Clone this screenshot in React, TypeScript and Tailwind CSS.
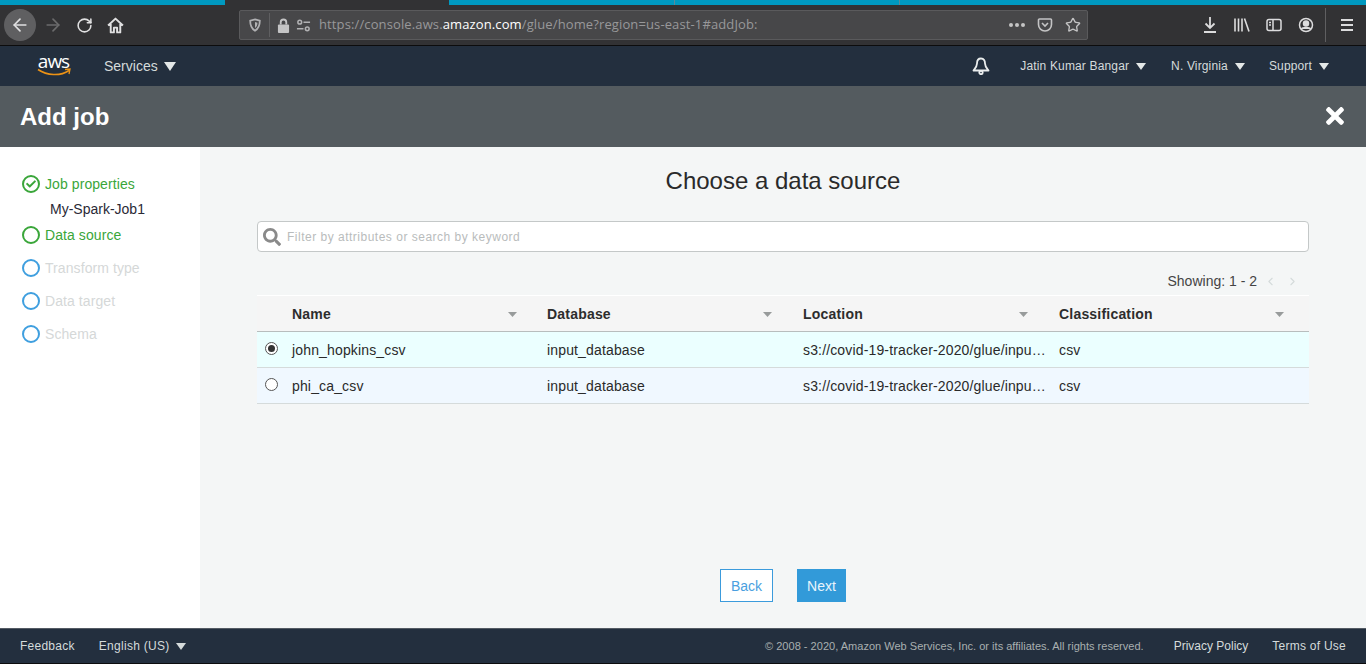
import { ArrowLeft, ArrowRight, RotateCw, Star, ChevronLeft, ChevronRight } from 'lucide-react';
import { FaCheck, FaSearch, FaTimes } from 'react-icons/fa';

const font = { fontFamily: '"Liberation Sans", Arial, sans-serif' };

function Caret({ className }: { className: string }) {
  return (
    <svg viewBox="0 0 10 8" preserveAspectRatio="none" className={className} fill="currentColor">
      <path d="M0 0h10L5 8z" />
    </svg>
  );
}

function BrowserBar() {
  return (
    <div className="h-[46px] bg-[#323234] border-b border-[#0c0c0d] flex flex-col shrink-0">
      {/* tab strip */}
      <div className="h-[5px] flex shrink-0">
        <div className="w-[225px] bg-[#0099c0]" />
        <div className="w-[224px] bg-[#323234]" />
        <div className="w-[225px] bg-[#0099c0]" />
        <div className="w-px bg-[#5a8a9a]" />
        <div className="w-[224px] bg-[#0099c0]" />
        <div className="w-px bg-[#5a8a9a]" />
        <div className="flex-1 bg-[#0099c0]" />
      </div>
      <div className="flex items-center h-[40px] text-[#e0e0e1]">
        <div className="ml-[4px] w-[32px] h-[32px] rounded-full bg-[#5f5f61] flex items-center justify-center">
          <ArrowLeft className="w-[20px] h-[20px]" strokeWidth={2} />
        </div>
        <ArrowRight className="ml-[7px] w-[20px] h-[20px] text-[#6b6b6c]" strokeWidth={2} />
        <RotateCw className="ml-[13px] w-[17px] h-[17px]" strokeWidth={2.2} />
        <svg viewBox="0 0 16 16" className="ml-[14px] w-[17px] h-[17px]" fill="none" stroke="currentColor" strokeWidth="1.8">
          <path d="M1 8l7-6.5L15 8M3.5 6.5V14.5h3V10h3v4.5h3V6.5" strokeLinejoin="round" />
        </svg>
        <div className="ml-[115px] w-[849px] h-[30px] bg-[#474749] border border-[#5a5a5c] rounded-[2px] flex items-center pl-[8px] pr-[6px]">
          <svg viewBox="0 0 16 16" className="w-[14px] h-[14px] text-[#b1b1b3]" fill="none" stroke="currentColor" strokeWidth="2">
            <path d="M8 1.5l5.5 1.5c0 5-1.5 9-5.5 11.5C4 12 2.5 8 2.5 3z" />
            <path d="M8 4.5l2.8.8c0 2.5-.8 4.5-2.8 6z" fill="currentColor" stroke="none" />
          </svg>
          <div className="w-px h-[24px] bg-[#5f5f61] ml-[7px] mr-[7px]" />
          <svg viewBox="0 0 14 16" className="w-[13px] h-[15px] text-[#c4c4c5]" fill="none">
            <path d="M4 7V4.5a3 3 0 016 0V7" stroke="currentColor" strokeWidth="2" />
            <rect x="1" y="7" width="12" height="9" rx="1" fill="currentColor" />
          </svg>
          <svg viewBox="0 0 16 16" className="ml-[6px] w-[15px] h-[15px] text-[#b1b1b3]" fill="none" stroke="currentColor" strokeWidth="1.6">
            <circle cx="4" cy="4.5" r="2" />
            <path d="M8 4.5h7M1 11.5h7" />
            <circle cx="12" cy="11.5" r="2" />
          </svg>
          <div className="ml-[8px] text-[13px] tracking-[0.12px] text-[#98989a] whitespace-nowrap" style={{ fontFamily: '"Open Sans", sans-serif' }}>
            https://console.aws.<span className="text-white">amazon.com</span>/glue/home?region=us-east-1#addJob:
          </div>
          <div className="ml-auto flex items-center text-[#c4c4c5]">
            <div className="flex gap-[2px]">
              <div className="w-[4px] h-[4px] rounded-full bg-[#c4c4c5]" />
              <div className="w-[4px] h-[4px] rounded-full bg-[#c4c4c5]" />
              <div className="w-[4px] h-[4px] rounded-full bg-[#c4c4c5]" />
            </div>
            <svg viewBox="0 0 16 16" className="ml-[12px] w-[16px] h-[16px]" fill="none" stroke="currentColor" strokeWidth="1.6">
              <path d="M2.5 2h11a1 1 0 011 1v4.5a6.5 6.5 0 01-13 0V3a1 1 0 011-1z" />
              <path d="M5 6l3 3 3-3" />
            </svg>
            <Star className="ml-[12px] w-[16px] h-[16px]" strokeWidth={2} />
          </div>
        </div>
        <div className="ml-auto flex items-center text-[#dcdcdd]">
          <svg viewBox="0 0 16 16" className="w-[16px] h-[16px]" fill="none" stroke="currentColor" strokeWidth="1.8">
            <path d="M8 0v11M3.5 6.5L8 11l4.5-4.5M2 15h12" />
          </svg>
          <svg viewBox="0 0 16 16" className="ml-[16px] w-[16px] h-[16px]" fill="none" stroke="currentColor" strokeWidth="1.6">
            <path d="M1 1.5v13M4.5 1.5v13M8 1.5v13M10.5 1.5l4.5 13" />
          </svg>
          <svg viewBox="0 0 16 16" className="ml-[16px] w-[16px] h-[16px]" fill="none" stroke="currentColor" strokeWidth="1.5">
            <rect x="1" y="2.5" width="14" height="11" rx="2" />
            <path d="M7 2.5v11M3 5.5h2M3 8h2" />
          </svg>
          <svg viewBox="0 0 16 16" className="ml-[16px] w-[16px] h-[16px]" fill="none" stroke="currentColor" strokeWidth="1.5">
            <circle cx="8" cy="8" r="6.5" />
            <circle cx="8" cy="6.5" r="2.5" fill="currentColor" />
            <path d="M3.5 12c1-2 8-2 9 0" fill="currentColor" />
          </svg>
          <div className="ml-[11px] w-px h-[34px] bg-[#5f5f61]" />
          <svg viewBox="0 0 16 16" className="ml-[13px] mr-[11px] w-[16px] h-[16px]" fill="currentColor">
            <rect x="2" y="2" width="12" height="2" />
            <rect x="2" y="7" width="12" height="2" />
            <rect x="2" y="12" width="12" height="2" />
          </svg>
        </div>
      </div>
    </div>
  );
}

function AwsNav() {
  return (
    <div className="h-[40px] bg-[#232f3e] flex items-center text-[#d5dbdb] shrink-0">
      <div className="ml-[36px] w-[35px] flex flex-col items-center -mt-[1px]">
        <span className="text-[19px] leading-[13px] text-white tracking-[-1px]" style={{ fontFamily: '"Open Sans", sans-serif' }}>aws</span>
        <svg viewBox="0 0 34 9" className="w-[34px] h-[9px]" fill="none">
          <path d="M1 1.5c9 6 22 7 31 1" stroke="#ec9215" strokeWidth="1.6" />
          <path d="M28 1.5l5-.5-1 5" stroke="#ec9215" strokeWidth="1.3" />
        </svg>
      </div>
      <span className="ml-[33px] text-[14px]">Services</span>
      <Caret className="ml-[6px] w-[12px] h-[9px] text-[#e4e8e8]" />
      <div className="ml-auto flex items-center text-[12px] tracking-[0.15px]">
        <svg viewBox="0 0 18 18" className="w-[18px] h-[18px] text-[#eaeded]" fill="none" stroke="currentColor" strokeWidth="1.8">
          <path d="M9 1.5c-3 0-4 2.5-4 5 0 3-2 5-3.5 7h15c-1.500-2-3.500-4-3.500-7 0-2.500-1-5-4-5z" strokeLinejoin="round" />
          <circle cx="9" cy="15.500" r="1.700" />
        </svg>
        <span className="ml-[30px]">Jatin Kumar Bangar</span>
        <Caret className="ml-[7px] w-[10px] h-[7px] text-[#e4e8e8]" />
        <span className="ml-[25px]">N. Virginia</span>
        <Caret className="ml-[7px] w-[10px] h-[7px] text-[#e4e8e8]" />
        <span className="ml-[24px]">Support</span>
        <Caret className="ml-[7px] mr-[37px] w-[10px] h-[7px] text-[#e4e8e8]" />
      </div>
    </div>
  );
}

function Step({ label, color, text, check }: { label: string; color: string; text: string; check?: boolean }) {
  return (
    <div className="flex items-center h-[20px]">
      <div className={`w-[18px] h-[18px] rounded-full border-2 flex items-center justify-center ${color}`}>
        {check && <FaCheck className="w-[10px] h-[10px] text-[#3aa63a]" />}
      </div>
      <span className={`ml-[5px] text-[14px] tracking-[0.08px] ${text}`}>{label}</span>
    </div>
  );
}

function Sidebar() {
  return (
    <div className="w-[200px] bg-white pl-[22px] pt-[27px] shrink-0">
      <Step label="Job properties" color="border-[#3aa63a]" text="text-[#3aa63a]" check />
      <div className="ml-[28px] mt-[5px] text-[14px] leading-[20px] text-[#2a2a36]">My-Spark-Job1</div>
      <div className="mt-[6px]">
        <Step label="Data source" color="border-[#3aa63a]" text="text-[#3aa63a]" />
      </div>
      <div className="mt-[13px]">
        <Step label="Transform type" color="border-[#3f9fdf]" text="text-[#d5d8d8]" />
      </div>
      <div className="mt-[13px]">
        <Step label="Data target" color="border-[#3f9fdf]" text="text-[#d5d8d8]" />
      </div>
      <div className="mt-[13px]">
        <Step label="Schema" color="border-[#3f9fdf]" text="text-[#d5d8d8]" />
      </div>
    </div>
  );
}

const cols = 'grid grid-cols-[35px_255px_256px_256px_1fr]';

function HeadCell({ label }: { label: string }) {
  return (
    <div className="flex items-center justify-between w-[225px]">
      <span className="font-bold text-[14px] text-[#2d2d2d] tracking-[0.2px]">{label}</span>
      <Caret className="w-[9px] h-[5px] text-[#989b9b]" />
    </div>
  );
}

function Row({ name, selected }: { name: string; selected?: boolean }) {
  return (
    <div className={`${cols} h-[36px] pt-[1px] items-center border-b border-[#d5dbdb] text-[14px] text-[#2a2a2a] tracking-[0.15px] ${selected ? 'bg-[#ebffff]' : 'bg-[#f0f8ff]'}`}>
      <div className="pl-[8px] -mt-[4px]">
        <div className="w-[13px] h-[13px] rounded-full border border-[#555] bg-white flex items-center justify-center">
          {selected && <div className="w-[7px] h-[7px] rounded-full bg-[#333]" />}
        </div>
      </div>
      <div>{name}</div>
      <div>input_database</div>
      <div className="whitespace-nowrap">s3://covid-19-tracker-2020/glue/inpu…</div>
      <div>csv</div>
    </div>
  );
}

function Content() {
  return (
    <div className="flex-1 bg-[#f4f6f6] flex flex-col pl-[57px] pr-[57px]">
      <h1 className="mt-[18px] text-center text-[24px] leading-[32px] text-[#2a2a2a]">Choose a data source</h1>
      <div className="mt-[24px] h-[31px] bg-white border border-[#c4c8c8] rounded-[4px] flex items-center pl-[5px]">
        <FaSearch className="w-[18px] h-[18px] text-[#8a8a8a]" />
        <span className="ml-[6px] pt-[1px] text-[12px] tracking-[0.5px] text-[#b9bcbc]">Filter by attributes or search by keyword</span>
      </div>
      <div className="mt-[19px] h-[20px] flex items-center justify-end text-[14px] text-[#444]">
        Showing: 1 - 2
        <ChevronLeft className="ml-[7px] w-[13px] h-[13px] text-[#d5dbdb]" />
        <ChevronRight className="ml-[9px] mr-[10px] w-[13px] h-[13px] text-[#d5dbdb]" />
      </div>
      <div className={`${cols} mt-[4px] h-[37px] pt-[1px] items-center bg-[#f5f5f5] border-t border-t-white border-b border-b-[#b8bdbd]`}>
        <div />
        <HeadCell label="Name" />
        <HeadCell label="Database" />
        <HeadCell label="Location" />
        <HeadCell label="Classification" />
      </div>
      <Row name="john_hopkins_csv" selected />
      <Row name="phi_ca_csv" />
      <div className="mt-auto mb-[26px] flex justify-center gap-[24px]">
        <button className="w-[53px] h-[33px] pt-[1px] bg-white border border-[#3b9bdc] text-[14px] text-[#4a9fe0]">Back</button>
        <button className="w-[49px] h-[33px] pt-[1px] bg-[#329ad9] text-[14px] text-[#e8f4fc]">Next</button>
      </div>
    </div>
  );
}

function Footer() {
  return (
    <div className="h-[36px] bg-[#232f3e] border-t border-t-[#545b64] border-b border-b-[#0c0c0d] flex items-center text-[12px] text-[#d5dbdb] shrink-0">
      <span className="ml-[20px] tracking-[0.25px]">Feedback</span>
      <span className="ml-[24px] tracking-[0.3px]">English (US)</span>
      <Caret className="ml-[6px] w-[10px] h-[7px] text-[#d5dbdb]" />
      <span className="ml-auto text-[11px] tracking-[0.02px] text-[#a9b0b0]">© 2008 - 2020, Amazon Web Services, Inc. or its affiliates. All rights reserved.</span>
      <span className="ml-[30px]">Privacy Policy</span>
      <span className="ml-[24px] mr-[20px] tracking-[0.25px]">Terms of Use</span>
    </div>
  );
}

export default function App() {
  return (
    <div className="h-[664px] w-[1366px] overflow-hidden flex flex-col" style={font}>
      <BrowserBar />
      <AwsNav />
      <div className="h-[61px] bg-[#545b5f] flex items-center justify-between pl-[20px] pr-[20px] shrink-0">
        <span className="text-[24px] font-bold text-white">Add job</span>
        <FaTimes className="w-[22px] h-[26px] text-white -mt-[1px]" />
      </div>
      <div className="flex-1 flex min-h-0">
        <Sidebar />
        <Content />
      </div>
      <Footer />
    </div>
  );
}
